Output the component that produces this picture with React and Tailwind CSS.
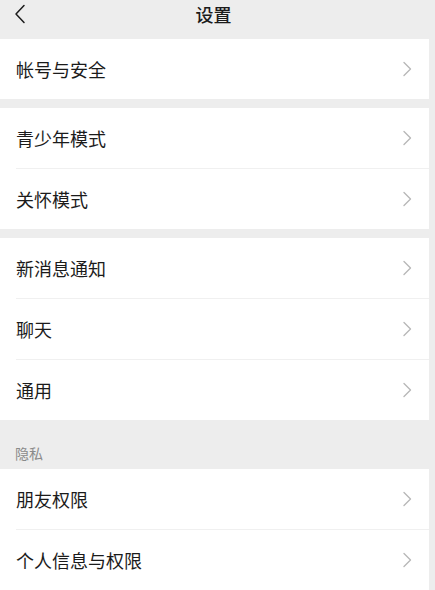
import React from 'react';

const font = { fontFamily: '"Noto Sans CJK SC", "Noto Sans", sans-serif' };

function Chevron() {
  return (
    <svg width="10" height="16" viewBox="0 0 10 16" fill="none" className="shrink-0">
      <polyline points="2,1.5 8.5,8 2,14.5" stroke="#b8b8b8" strokeWidth="1.4" strokeLinecap="round" strokeLinejoin="round" />
    </svg>
  );
}

function Row({ label, divider }) {
  return (
    <>
      {divider && <div className="ml-4 h-px bg-[#f0f0f0]" />}
      <div className="h-[60px] flex items-center justify-between pl-4 pr-[17px]">
        <span className="text-[18px] text-[#1b1b1b] leading-none">{label}</span>
        <Chevron />
      </div>
    </>
  );
}

function Card({ items }) {
  return (
    <div className="bg-white w-[429px]">
      {items.map((t, i) => (
        <Row key={t} label={t} divider={i > 0} />
      ))}
    </div>
  );
}

export default function App() {
  return (
    <div className="w-[435px] h-[590px] overflow-hidden bg-[#ededed]" style={font}>
      {/* Header */}
      <div className="relative w-[427px] h-[39px] flex justify-center pt-[2px]">
        <svg width="12" height="20" viewBox="0 0 12 20" fill="none" className="absolute left-[14px] top-[4px]">
          <polyline points="10,1.5 2,10 10,18.5" stroke="#1b1b1b" strokeWidth="1.5" strokeLinecap="round" strokeLinejoin="round" />
        </svg>
        <span className="text-[18px] font-medium text-[#1b1b1b] leading-[24px]">设置</span>
      </div>

      <Card items={['帐号与安全']} />
      <div className="h-[9px]" />
      <Card items={['青少年模式', '关怀模式']} />
      <div className="h-[9px]" />
      <Card items={['新消息通知', '聊天', '通用']} />

      <div className="h-[49px] flex items-end pl-[15px] pb-[9px]">
        <span className="text-[14px] text-[#8a8a8a] leading-none">隐私</span>
      </div>

      <Card items={['朋友权限', '个人信息与权限']} />
    </div>
  );
}
